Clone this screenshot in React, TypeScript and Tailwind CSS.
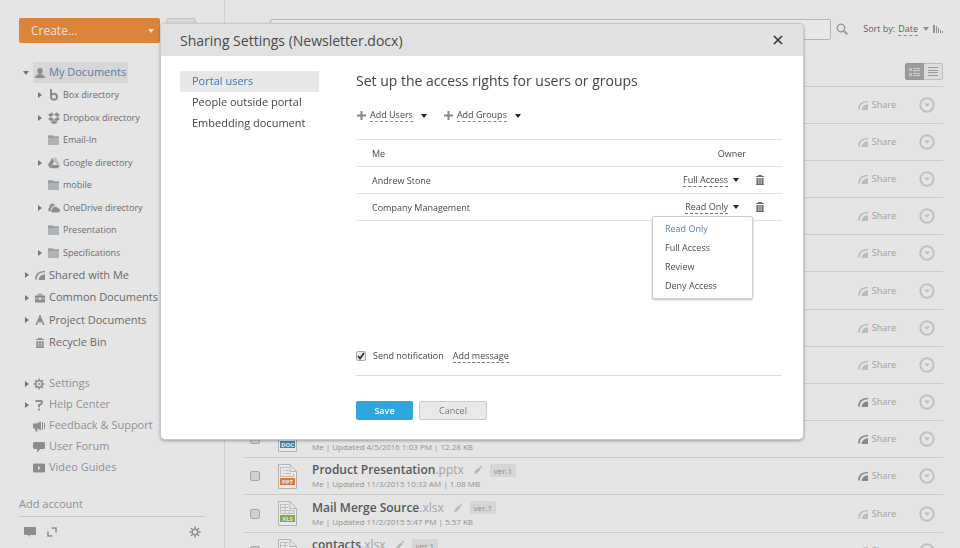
import { useState } from 'react';
import type { ReactNode } from 'react';
import clsx from 'clsx';

type IconName =
  | 'user' | 'box' | 'dropbox' | 'folder' | 'drive' | 'cloud' | 'share' | 'case'
  | 'compass' | 'trash' | 'gear' | 'help' | 'horn' | 'bubble' | 'video';

const ICONS: Record<IconName, ReactNode> = {
  user: <path d="M6 0c2.200 0 3.300 1.400 3.300 3.300 0 1.300-.6 2.500-1.400 3.200v1.200c2 .5 3.900 1.300 4.100 4.300H0c.2-3 2.100-3.800 4.100-4.300V6.500C3.300 5.800 2.700 4.600 2.700 3.300 2.700 1.400 3.800 0 6 0z" />,
  box: (
    <>
      <path d="M2 0h2v8H2z" />
      <circle cx="6" cy="7.800" r="3" fill="none" stroke="currentColor" strokeWidth="2" />
    </>
  ),
  dropbox: (
    <>
      <path d="M3.500 .5L0 2.900l2.500 2L6 2.700zM8.500 .5L12 2.900l-2.500 2L6 2.700zM0 7.100l3.500 2.300L6 7.200 2.500 4.900zM12 7.100L8.500 9.400 6 7.200l3.500-2.300z" />
      <path d="M6 8l-2.500 2-1-.6v1L6 12.200l3.500-1.800v-1l-1 .6z" />
    </>
  ),
  folder: (
    <>
      <path d="M0 1.500h5l1 1H11V11H0z" fill="#adb3b6" />
      <path d="M0 1.500h5l1 1H11V4H0z" fill="#989c9f" />
    </>
  ),
  drive: (
    <>
      <path d="M4 1L0 8l2 3.200L6.200 4.500z" />
      <path d="M4.500 .8H8l4 6.700H8.200z" opacity=".45" />
      <path d="M4.200 8H12l-2 3.200H2.300z" />
    </>
  ),
  cloud: (
    <>
      <path d="M1.500 9.500A2.200 2.200 0 0 1 1.500 5.500 3 3 0 0 1 7 3.200 4 4 0 0 0 3.500 6.200 2.500 2.500 0 0 0 2.800 9.500z" />
      <path d="M4.500 10.500A2 2 0 0 1 4.500 6.800 2.900 2.900 0 0 1 10 6.200 2.200 2.200 0 0 1 10.500 10.500z" />
    </>
  ),
  share: (
    <>
      <path d="M1 11.500C1 5.500 5 2 12 1.800" fill="none" stroke="currentColor" strokeWidth="2" />
      <path d="M4.200 12C4.800 8 7 5.500 12 5v7z" />
    </>
  ),
  case: <path d="M0 3h3.500V1h5v2H12V6.300H7.500v-.8h-3v.8H0zM4.500 3h3V2h-3zM0 7h4.500v1h3V7H12v4.500H0z" fillRule="evenodd" />,
  compass: <path d="M5 0h2v1.700L11.500 12H9.500L7.400 7.500V9.500L6 8.200 4.600 9.500V7.500L2.500 12H.5L5 1.700z" />,
  trash: (
    <g transform="scale(1.200)">
      <path d="M3 0h4v1H3zM1 1h8v1H1z" />
      <path d="M1 3h8v7H1z" opacity=".55" />
      <path d="M2 3h1v7H2zM4.500 3h1v7h-1zM7 3h1v7H7zM1 9h8v1H1z" />
    </g>
  ),
  gear: (
    <>
      <circle cx="6" cy="6" r="3.200" fill="none" stroke="currentColor" strokeWidth="1.500" />
      <circle cx="6" cy="6" r="1" />
      <path d="M6 0.500v2M6 9.500v2M.5 6h2M9.500 6h2M2.100 2.100l1.400 1.400M8.500 8.500l1.400 1.400M2.100 9.900l1.400-1.400M8.500 3.500l1.400-1.400" stroke="currentColor" strokeWidth="1.600" />
    </>
  ),
  help: (
    <>
      <path d="M2.500 2h5.200q1.300 0 1.300 1.300T7.700 5.400L6 6v2.300" fill="none" stroke="currentColor" strokeWidth="2" />
      <path d="M5 9.500h2v2H5z" />
    </>
  ),
  horn: <path d="M0 3.500h3.500L8 1.500v9L4.500 8.500v3h-2l-.5-3H0zM9 2h1v8H9zM11 3h1v6h-1z" />,
  bubble: <path d="M1.500 1h9Q12 1 12 2.500v4Q12 8 10.500 8H7.500L4 11.500V8H1.500Q0 8 0 6.500v-4Q0 1 1.500 1z" />,
  video: <path d="M1 1.500h10q1 0 1 1v7q0 1-1 1H1q-1 0-1-1v-7q0-1 1-1zM5 4v4l2.500-2z" fillRule="evenodd" />,
};

function Icon({ name, className }: { name: IconName; className?: string }) {
  return (
    <svg viewBox="0 0 12 12" fill="currentColor" aria-hidden="true" className={clsx('shrink-0', className)}>
      {ICONS[name]}
    </svg>
  );
}

function Caret({ className }: { className?: string }) {
  return (
    <svg viewBox="0 0 8 4" fill="currentColor" aria-hidden="true" className={clsx('h-1 w-2 shrink-0', className)}>
      <path d="M1 0h6L4 4z" />
    </svg>
  );
}

interface TreeItem {
  label: string;
  icon: IconName;
  level: 0 | 1;
  state?: 'open' | 'closed';
}

const TREE: TreeItem[] = [
  { label: 'My Documents', icon: 'user', level: 0, state: 'open' },
  { label: 'Box directory', icon: 'box', level: 1, state: 'closed' },
  { label: 'Dropbox directory', icon: 'dropbox', level: 1, state: 'closed' },
  { label: 'Email-In', icon: 'folder', level: 1 },
  { label: 'Google directory', icon: 'drive', level: 1, state: 'closed' },
  { label: 'mobile', icon: 'folder', level: 1 },
  { label: 'OneDrive directory', icon: 'cloud', level: 1, state: 'closed' },
  { label: 'Presentation', icon: 'folder', level: 1 },
  { label: 'Specifications', icon: 'folder', level: 1, state: 'closed' },
  { label: 'Shared with Me', icon: 'share', level: 0, state: 'closed' },
  { label: 'Common Documents', icon: 'case', level: 0, state: 'closed' },
  { label: 'Project Documents', icon: 'compass', level: 0, state: 'closed' },
  { label: 'Recycle Bin', icon: 'trash', level: 0 },
];

const LINKS: TreeItem[] = [
  { label: 'Settings', icon: 'gear', level: 0, state: 'closed' },
  { label: 'Help Center', icon: 'help', level: 0, state: 'closed' },
  { label: 'Feedback & Support', icon: 'horn', level: 0 },
  { label: 'User Forum', icon: 'bubble', level: 0 },
  { label: 'Video Guides', icon: 'video', level: 0 },
];

function Expander({ state }: { state?: 'open' | 'closed' }) {
  return (
    <span className="flex w-[14px] shrink-0 items-center text-[#757575]">
      {state === 'open' && <Caret className="ml-px" />}
      {state === 'closed' && (
        <svg viewBox="0 0 4 6" fill="currentColor" aria-hidden="true" className="ml-1 h-[6px] w-1">
          <path d="M0 0l4 3-4 3z" />
        </svg>
      )}
    </span>
  );
}

function Sidebar() {
  return (
    <aside className="w-[225px] shrink-0 border-r border-[#cfcfcf] pt-[18px] pr-[19px] pl-[19px]">
      <div className="flex gap-[6px]">
        <button className="flex h-[25px] w-[141px] items-center justify-between rounded-xs bg-[#da8339] pr-[5px] pl-3 text-[12px] text-[#efe3d8]">
          Create...
          <Caret />
        </button>
        <button aria-label="Upload" className="h-[25px] w-[30px] rounded-xs border border-[#c4c4c4] bg-[#d8d8d8]" />
      </div>

      <ul className="mt-[18px]">
        {TREE.map((item, i) => (
          <li
            key={item.label}
            className={clsx('flex items-center odd:h-[23px] even:h-[22px]', item.level === 0 ? 'pl-[2px]' : 'pl-[15px]')}
          >
            <Expander state={item.state} />
            <a
              href="#"
              className={clsx(
                'flex items-center whitespace-nowrap',
                item.level === 0 ? '-ml-[2px] gap-1 pl-[2px] text-[11px] text-[#686868]' : 'gap-[3px] text-[9px] text-[#6c6c6c]',
                i === 0 && 'h-[21px] bg-[#d6d6d6] pr-[2px] text-[#5a7ba8]!',
              )}
            >
              <Icon name={item.icon} className={item.level === 0 ? 'size-[10px] text-[#8b8e91]' : 'size-3 text-[#8b8e91]'} />
              {item.label}
            </a>
          </li>
        ))}
      </ul>

      <ul className="mt-[19px] text-[11px] text-[#8e9093]">
        {LINKS.map((item) => (
          <li key={item.label} className="flex h-[21px] items-center pl-[2px]">
            <Expander state={item.state} />
            <a href="#" className="-ml-[2px] flex items-center gap-1 whitespace-nowrap">
              <Icon name={item.icon} className="size-3 text-[#8b8e91]" />
              {item.label}
            </a>
          </li>
        ))}
      </ul>

      <div className="mt-[17px] border-b border-[#c8c8c8] pb-[3px] text-[11px] leading-[18px]">
        <a href="#" className="text-[#8e9093]">Add account</a>
      </div>
      <div className="flex items-center px-1 pt-[9px] text-[#8b8e91]">
        <button aria-label="Chat">
          <svg viewBox="0 0 14 12" className="h-3 w-[14px]" fill="currentColor">
            <path d="M2 1h10q1 0 1 1v6q0 1-1 1H7v2L5 9H2Q1 9 1 8V2q0-1 1-1z" />
          </svg>
        </button>
        <button aria-label="Expand" className="ml-[9px]">
          <svg viewBox="0 0 12 12" className="size-3" fill="none" stroke="currentColor" strokeWidth="1.500">
            <path d="M5.500 2H10v4.500M2 5.500V10h4.500" />
          </svg>
        </button>
        <button aria-label="Preferences" className="ml-auto">
          <svg viewBox="0 0 12 12" className="size-3" fill="none" stroke="currentColor">
            <circle cx="6" cy="6" r="2.800" strokeWidth="1.400" />
            <path d="M6 .3v2.500M6 9.200v2.500M.3 6h2.500M9.200 6h2.500M2 2l1.700 1.700M8.300 8.300L10 10M2 10l1.700-1.700M8.300 3.700L10 2" strokeWidth="1.500" />
          </svg>
        </button>
      </div>
    </aside>
  );
}

interface FileInfo {
  name: string;
  ext: string;
  badge: 'DOC' | 'PPT' | 'XLS';
  meta?: string;
}

interface FileRow {
  shared: boolean;
  file?: FileInfo;
}

const ROWS: FileRow[] = [
  { shared: false },
  { shared: false },
  { shared: false },
  { shared: false },
  { shared: false },
  { shared: false },
  { shared: false },
  { shared: false },
  { shared: true },
  { shared: true, file: { name: 'Newsletter', ext: '.docx', badge: 'DOC', meta: 'Me | Updated 4/5/2016 1:03 PM | 12.28 KB' } },
  { shared: true, file: { name: 'Product Presentation', ext: '.pptx', badge: 'PPT', meta: 'Me | Updated 11/3/2015 10:32 AM | 1.08 MB' } },
  { shared: false, file: { name: 'Mail Merge Source', ext: '.xlsx', badge: 'XLS', meta: 'Me | Updated 11/2/2015 5:47 PM | 5.57 KB' } },
  { shared: false, file: { name: 'contacts', ext: '.xlsx', badge: 'XLS' } },
];

const BADGE_COLORS = { DOC: '#3f86ac', PPT: '#dc7a35', XLS: '#7fa843' };

function FileIcon({ badge }: { badge: FileInfo['badge'] }) {
  return (
    <svg viewBox="0 0 19 25" className="h-[25px] w-[19px] shrink-0" aria-hidden="true">
      <path d="M.5.500h11.500l6.500 7v17H.5z" fill="#e9e9e9" stroke="#b3b3b3" />
      <path d="M12 .5v7h6.500" fill="none" stroke="#b3b3b3" />
      {badge === 'XLS' ? (
        <path d="M2.500 3.500h8M2.500 6.500h8M2.500 9.500h14M2.500 12.500h14M2.500 3.500v9M7 3.500v9M11.500 8.500v4M16 9.500v3" fill="none" stroke="#bcbcbc" />
      ) : (
        <path d="M2.500 3.500h8M2.500 3.500v9h13v-3M5 6.500h1M7 6.500h4M5 9.500h1M7 9.500h6" fill="none" stroke="#bcbcbc" />
      )}
      <rect x="2" y="14" width="15" height="7" fill={BADGE_COLORS[badge]} />
      <text x="9.500" y="20" textAnchor="middle" fontSize="6" fontWeight="700" fill="#e9e9e9" className="font-['Open_Sans',sans-serif]">
        {badge}
      </text>
    </svg>
  );
}

function FileListRow({ row }: { row: FileRow }) {
  const { file, shared } = row;
  return (
    <li className="flex h-[37px] items-center border-t border-[#cbcbcb] pr-2 pl-[6px] nth-[6n]:h-[38px]">
      {file && (
        <>
          <input
            type="checkbox"
            aria-label={`${file.name}${file.ext}`}
            className="size-[10px] shrink-0 appearance-none rounded-xs border border-[#a5a5a5] bg-[#d0d0d0]"
          />
          <span className="ml-[18px]">
            <FileIcon badge={file.badge} />
          </span>
          <div className="ml-[15px] min-w-0">
            <div className="flex items-center text-[12px] leading-[16px] whitespace-nowrap">
              <a href="#" className="font-semibold text-[#55585a]">
                {file.name}
                <span className="font-normal text-[#a3a3a3]">{file.ext}</span>
              </a>
              <button aria-label="Edit" className="ml-[9px] text-[#b9b9b9]">
                <svg viewBox="0 0 10 10" className="size-[10px]" fill="currentColor">
                  <path d="M1 9l.6-2.600 4.200-4.200 2 2L3.600 8.400zM6.400 1.600L7.500.600l2 2-1.100 1z" />
                </svg>
              </button>
              <span className="ml-[7px] rounded-xs bg-[#d5d5d5] px-1 text-[8px] leading-[13px] text-[#8c8c8c]">ver.1</span>
            </div>
            <p className="min-h-3 text-[8px] leading-[12px] whitespace-nowrap text-[#8f8f8f]">{file.meta}</p>
          </div>
        </>
      )}
      <button className="ml-auto flex items-center gap-1 text-[9px] text-[#a0a0a0]">
        <Icon name="share" className={clsx('size-[10px]', shared ? 'text-[#85888b]' : 'text-[#bbbbbb]')} />
        Share
      </button>
      <button aria-label="Actions" className="ml-[23px]">
        <svg viewBox="0 0 16 16" className="size-4" fill="#bdbdbd">
          <circle cx="8" cy="8" r="6.700" fill="none" stroke="#c0c0c0" strokeWidth="2" />
          <path d="M5 6.500h6L8 9.800z" />
        </svg>
      </button>
    </li>
  );
}

function FileList() {
  return (
    <main className="min-w-0 flex-1 pt-[18px] pr-[17px] pl-[19px]">
      <div className="flex h-[22px] items-center pl-[26px] text-[9px] text-[#626262]">
        <input
          type="search"
          aria-label="Search"
          className="h-[21px] min-w-0 flex-1 rounded-xs border border-[#b5b5b5] bg-[#e8e8e8]"
        />
        <button aria-label="Find" className="ml-[5px] text-[#9a9a9a]">
          <svg viewBox="0 0 12 12" className="size-3" fill="none" stroke="currentColor">
            <circle cx="5" cy="5" r="3.700" strokeWidth="1.500" />
            <path d="M7.700 7.700l3.600 3.600" strokeWidth="2" />
          </svg>
        </button>
        <span className="ml-[15px]">Sort by:</span>
        <button className="ml-[3px] flex items-center gap-1 leading-[13px]">
          <span className="border-b border-dashed border-[#8a8a8a]">Date</span>
          <Caret className="text-[#8f8f8f]" />
        </button>
        <button aria-label="Sort direction" className="ml-[3px] text-[#8f8f8f]">
          <svg viewBox="0 0 10 8" className="h-2 w-[10px]" fill="currentColor">
            <path d="M0 0h2v8H0zM3 1h1v7H3zM5 3h1v5H5zM7 5h1v3H7zM9 6h1v2H9z" />
          </svg>
        </button>
      </div>

      <div className="mt-[23px] mb-[6px] flex justify-end">
        <button aria-label="Detailed view" className="flex h-[17px] w-[19px] items-center justify-center rounded-l-xs border border-[#979797] bg-[#9c9c9c]">
          <svg viewBox="0 0 11 10" className="h-[10px] w-[11px]" fill="none" stroke="#d0d0d0">
            <path d="M.5 1.500h2v2h-2zM.5 6.500h2v2h-2zM4 1.500h7M4 3.500h7M4 6.500h7M4 8.500h7" />
          </svg>
        </button>
        <button aria-label="Compact view" className="flex h-[17px] w-[19px] items-center justify-center rounded-r-xs border border-l-0 border-[#bdbdbd] bg-[#dcdcdc]">
          <svg viewBox="0 0 10 9" className="h-[9px] w-[10px]" stroke="#9a9a9a">
            <path d="M0 .5h10M0 3.500h10M0 5.500h10M0 8.500h10" />
          </svg>
        </button>
      </div>

      <ul>
        {ROWS.map((row, i) => (
          <FileListRow key={i} row={row} />
        ))}
      </ul>
    </main>
  );
}

const TABS = ['Portal users', 'People outside portal', 'Embedding document'];
const ACCESS = ['Read Only', 'Full Access', 'Review', 'Deny Access'];

interface AccessPickerProps {
  value: string;
  open: boolean;
  onToggle: () => void;
  onPick: (value: string) => void;
}

function AccessPicker({ value, open, onToggle, onPick }: AccessPickerProps) {
  return (
    <div className="relative flex justify-end">
      <button aria-haspopup="listbox" aria-expanded={open} onClick={onToggle} className="flex items-center gap-1 leading-[12px]">
        <span className="border-b border-dashed border-[#777]">{value}</span>
        <Caret className="text-[#222]" />
      </button>
      {open && (
        <ul
          role="listbox"
          className="absolute top-full -right-[13px] z-10 mt-[2px] w-[101px] rounded-xs border border-[#cfcfcf] bg-white pt-[2px] pb-[3px] text-left shadow-[0_1px_2px_#00000040]"
        >
          {ACCESS.map((option) => (
            <li key={option} role="option" aria-selected={option === value}>
              <button
                onClick={() => onPick(option)}
                className={clsx('block h-[19px] w-full px-3 text-left', option === value ? 'text-[#5483ae]' : 'text-[#4c4c4c]')}
              >
                {option}
              </button>
            </li>
          ))}
        </ul>
      )}
    </div>
  );
}

function AddButton({ label }: { label: string }) {
  return (
    <button className="flex items-center leading-[12px]">
      <svg viewBox="0 0 9 9" className="mr-1 size-[9px]" fill="#83888d">
        <path d="M3.500 0h2v3.500H9v2H5.500V9h-2V5.500H0v-2h3.500z" />
      </svg>
      <span className="border-b border-dashed border-[#888]">{label}</span>
      <Caret className="ml-[7px] text-[#222]" />
    </button>
  );
}

function SharingDialog() {
  const [tab, setTab] = useState(TABS[0]);
  const [openRow, setOpenRow] = useState<string | null>('Company Management');
  const [rights, setRights] = useState<Record<string, string>>({
    'Andrew Stone': 'Full Access',
    'Company Management': 'Read Only',
  });

  return (
    <div className="fixed inset-0 flex items-start justify-center pt-6 pl-1">
      <div
        role="dialog"
        aria-labelledby="sharing-title"
        className="w-full max-w-[642px] rounded-sm bg-white shadow-[0_0_0_1px_#c9c9c9,0_1px_3px_1px_#00000050]"
      >
        <header className="flex h-8 items-center justify-between rounded-t-sm bg-[#e1e1e1] pr-5 pl-[19px]">
          <h2 id="sharing-title" className="text-[14px] text-[#4a4a4a]">Sharing Settings (Newsletter.docx)</h2>
          <button aria-label="Close">
            <svg viewBox="0 0 10 10" className="size-[10px]" stroke="#333" strokeWidth="1.600">
              <path d="M1 1l8 8M9 1L1 9" />
            </svg>
          </button>
        </header>

        <div className="flex gap-[37px] pt-[15px] pr-[21px] pb-[19px] pl-[19px]">
          <nav className="w-[139px] shrink-0 text-[11px]">
            {TABS.map((name) => (
              <button
                key={name}
                onClick={() => setTab(name)}
                className={clsx(
                  'block h-[21px] w-full pl-3 text-left whitespace-nowrap',
                  name === tab ? 'bg-[#e8e8e8] text-[#3d74b0]' : 'text-[#444]',
                )}
              >
                {name}
              </button>
            ))}
          </nav>

          <section className="flex-1 text-[9px] leading-[15px] text-[#484848]">
            <h3 className="text-[14px] leading-[20px] text-[#444]">Set up the access rights for users or groups</h3>
            <div className="mt-[18px] flex gap-4 pl-[1px]">
              <AddButton label="Add Users" />
              <AddButton label="Add Groups" />
            </div>

            <table className="mt-[17px] w-full border-t border-[#e2e2e2]">
              <tbody>
                <tr className="h-[27px] border-b border-[#e2e2e2]">
                  <td className="pl-4">Me</td>
                  <td className="pr-[6px] text-right">Owner</td>
                  <td className="w-[30px]" />
                </tr>
                {Object.entries(rights).map(([name, value]) => (
                  <tr key={name} className="h-[27px] border-b border-[#e2e2e2]">
                    <td className="pl-4">{name}</td>
                    <td className="pr-3">
                      <AccessPicker
                        value={value}
                        open={openRow === name}
                        onToggle={() => setOpenRow(openRow === name ? null : name)}
                        onPick={(next) => {
                          setRights({ ...rights, [name]: next });
                          setOpenRow(null);
                        }}
                      />
                    </td>
                    <td className="w-[30px] pl-[3px]">
                      <button aria-label={`Remove ${name}`} className="block">
                        <Icon name="trash" className="size-[10px] text-[#6c7074]" />
                      </button>
                    </td>
                  </tr>
                ))}
              </tbody>
            </table>

            <div className="mt-[127px] flex items-center border-b border-[#dcdcdc] pb-[12px]">
              <label className="flex items-center gap-[7px]">
                <span className="relative flex">
                  <input
                    type="checkbox"
                    defaultChecked
                    className="peer size-[10px] appearance-none rounded-xs border border-[#aaa] bg-[#ececec]"
                  />
                  <svg
                    viewBox="0 0 10 10"
                    className="pointer-events-none absolute inset-0 hidden size-[10px] peer-checked:block"
                    fill="none"
                    stroke="#333"
                    strokeWidth="1.800"
                  >
                    <path d="M2 5l2 2.500L8 2" />
                  </svg>
                </span>
                Send notification
              </label>
              <button className="ml-[9px] border-b border-dashed border-[#777] leading-[13px]">Add message</button>
            </div>

            <div className="mt-[25px] flex gap-[6px]">
              <button className="h-[19px] w-[57px] rounded-xs bg-[#2da7dd] font-semibold text-white">Save</button>
              <button className="h-[19px] w-[68px] rounded-xs border border-[#cbcbcb] bg-[#e9e9e9] text-[#777]">Cancel</button>
            </div>
          </section>
        </div>
      </div>
    </div>
  );
}

export default function App() {
  return (
    <div className="flex h-screen overflow-hidden bg-[#e5e5e5] font-['Open_Sans',sans-serif]">
      <Sidebar />
      <FileList />
      <SharingDialog />
    </div>
  );
}
